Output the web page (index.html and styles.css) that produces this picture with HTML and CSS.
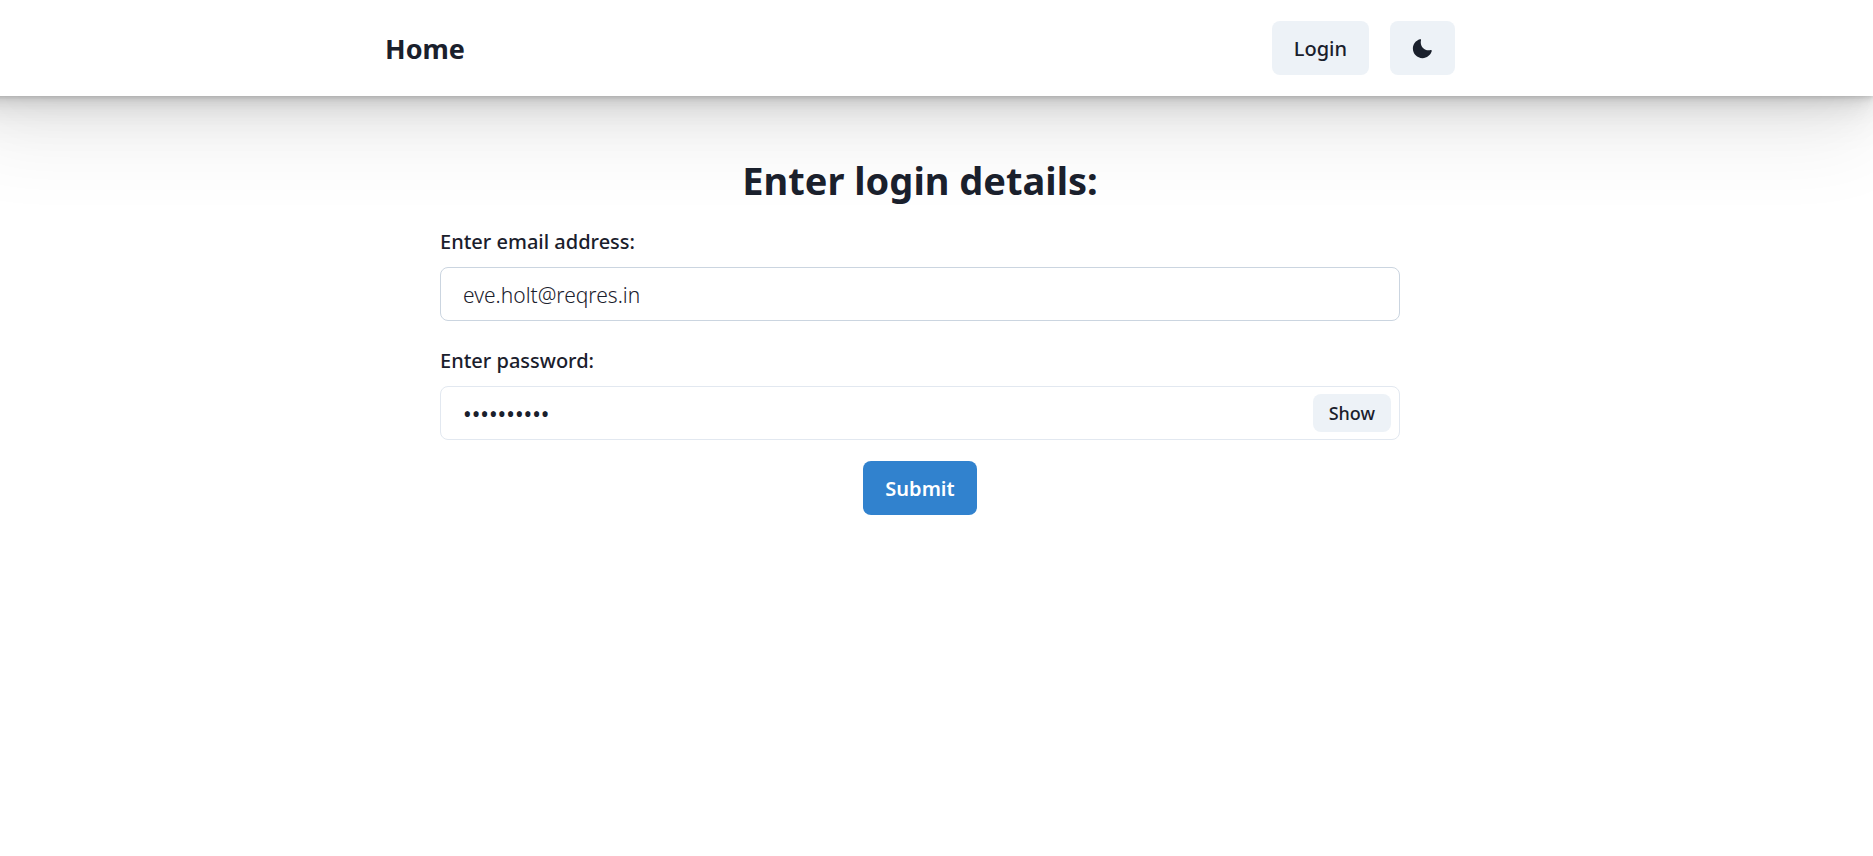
FILE: index.html
```html
<!DOCTYPE html>
<html lang="en">
<head>
<meta charset="utf-8">
<meta name="viewport" content="width=device-width, initial-scale=1">
<title>Login</title>
<link rel="stylesheet" href="styles.css">
</head>
<body>
<div class="page">
  <header class="header">
    <nav class="nav">
      <a class="brand" href="#">Home</a>
      <div class="nav-actions">
        <button class="button" type="button">Login</button>
        <button class="button button-icon" type="button" aria-label="Toggle dark mode">
          <svg class="icon" viewBox="0 0 24 24" aria-hidden="true"><path fill="currentColor" d="M21.4,13.7C20.6,13.9,19.8,14,19,14c-5,0-9-4-9-9c0-0.8,0.1-1.6,0.3-2.4c0.1-0.3,0-0.7-0.3-1 c-0.3-0.3-0.6-0.4-1-0.3C4.3,2.7,1,7.1,1,12c0,6.1,4.9,11,11,11c4.9,0,9.3-3.3,10.6-8.1c0.1-0.3,0-0.7-0.3-1 C22.1,13.7,21.7,13.6,21.4,13.7z"/></svg>
        </button>
      </div>
    </nav>
  </header>
  <main class="main">
    <h1 class="title">Enter login details:</h1>
    <form class="form">
      <div class="fields">
        <div class="field">
          <label class="label" for="email">Enter email address:</label>
          <input class="input input-hover" id="email" type="email" value="eve.holt@reqres.in">
        </div>
        <div class="field">
          <label class="label" for="password">Enter password:</label>
          <div class="input input-group">
            <input class="input-inner" id="password" type="password" value="cityslicka">
            <button class="button button-small" type="button">Show</button>
          </div>
        </div>
      </div>
      <button class="button button-primary" type="submit">Submit</button>
    </form>
  </main>
</div>
</body>
</html>
```
FILE: styles.css
```css
* {
  box-sizing: border-box;
}

body {
  margin: 0;
  overflow-x: hidden;
  background: #fff;
  color: #1a202c;
  font-family: "Segoe UI", "Noto Sans", "Open Sans", sans-serif;
  font-size: 20px;
  line-height: 32px;
}

.page {
  margin-left: -33px;
}

.header {
  padding: 21px 22px;
  background: #fff;
  box-shadow:
    0 1px 3px rgba(0, 0, 0, 0.07),
    0 3px 5px rgba(0, 0, 0, 0.07),
    0 5px 11px rgba(0, 0, 0, 0.07),
    0 11px 22px rgba(0, 0, 0, 0.07),
    0 22px 43px rgba(0, 0, 0, 0.07),
    0 43px 86px rgba(0, 0, 0, 0.07);
}

.nav {
  display: flex;
  align-items: center;
  justify-content: space-between;
  max-width: 1070px;
  margin: 0 auto;
}

.brand {
  padding-top: 2px;
  color: inherit;
  font-size: 27px;
  font-weight: 700;
  text-decoration: none;
}

.nav-actions {
  display: flex;
  gap: 21px;
}

.button {
  display: inline-flex;
  align-items: center;
  justify-content: center;
  height: 54px;
  padding: 2px 22px 0;
  border: 0;
  border-radius: 8px;
  background: #edf2f7;
  color: inherit;
  font: inherit;
  font-weight: 500;
  cursor: pointer;
}

.button-icon {
  padding-top: 0;
}

.icon {
  display: block;
  width: 21px;
  height: 21px;
}

.main {
  max-width: 960px;
  margin: 0 auto;
  padding-top: 59px;
}

.title {
  margin: 0 0 21px;
  font-size: 38px;
  font-weight: 700;
  line-height: 50px;
  text-align: center;
}

.form {
  display: flex;
  flex-direction: column;
  gap: 21px;
}

.fields {
  display: flex;
  flex-direction: column;
  gap: 24px;
}

.field {
  display: flex;
  flex-direction: column;
  gap: 9px;
}

.label {
  font-weight: 500;
}

.input {
  width: 100%;
  height: 54px;
  padding: 2px 22px 0;
  border: 1px solid #e2e8f0;
  border-radius: 8px;
  background: transparent;
  color: inherit;
  font: inherit;
  font-size: 21px;
  font-weight: 300;
}

.input-hover {
  border-color: #cbd5e0;
}

.input-group {
  display: flex;
  align-items: center;
  padding: 0 8px 0 22px;
}

.input-inner {
  flex: 1;
  min-width: 0;
  padding: 2px 0 0;
  border: 0;
  outline: 0;
  background: transparent;
  color: inherit;
  font: inherit;
  font-size: 23px;
  font-weight: 400;
}

.button-small {
  height: 38px;
  padding: 0 16px;
  font-size: 18px;
}

.button-primary {
  align-self: center;
  background: #3182ce;
  color: #fff;
  font-weight: 600;
}
```
